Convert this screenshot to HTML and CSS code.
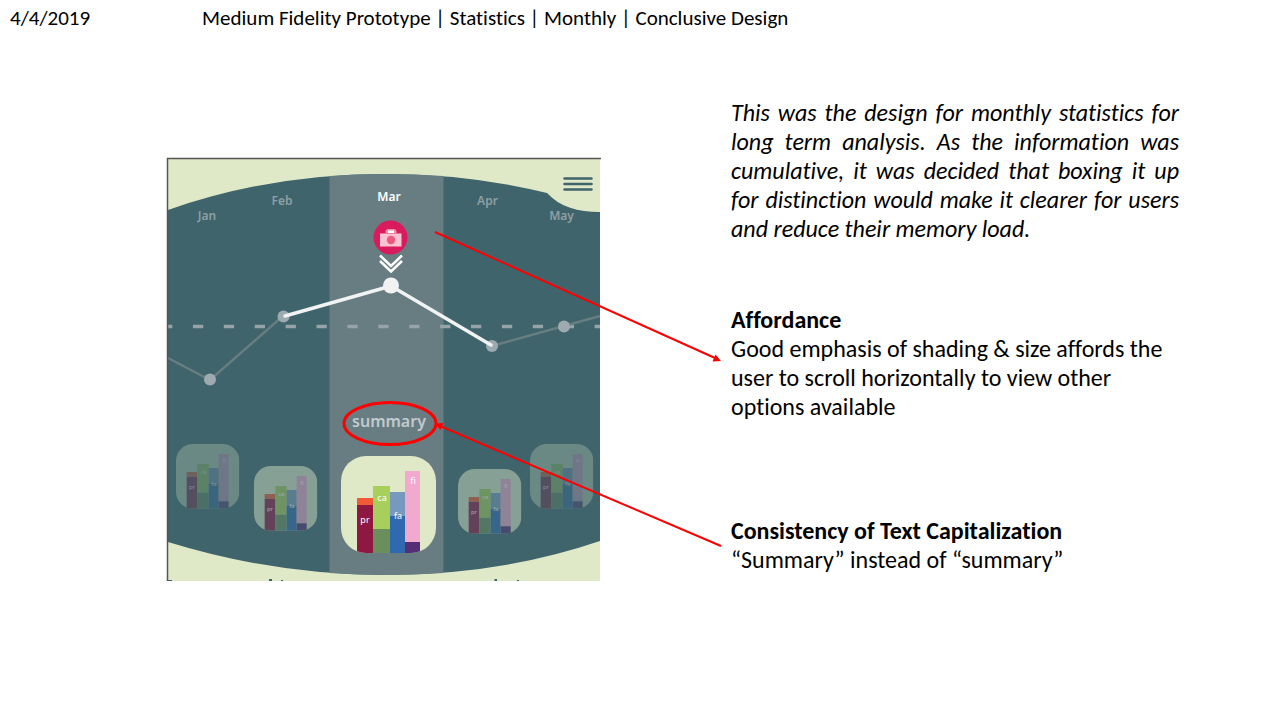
FILE: index.html
```html
<!DOCTYPE html>
<html lang="en">
<head>
<meta charset="utf-8">
<title>Medium Fidelity Prototype</title>
<link rel="stylesheet" href="styles.css">
</head>
<body>
<header class="topbar">
  <time class="date" datetime="2019-04-04">4/4/2019</time>
  <h1 class="title">Medium Fidelity Prototype | Statistics | Monthly | Conclusive Design</h1>
</header>
<main class="slide">
  <svg class="mockup" viewBox="166 158 435 423" role="img" aria-label="Monthly statistics screen">
    <defs>
      <clipPath id="card-clip"><rect width="95" height="97" rx="25"/></clipPath>
      <g id="card" clip-path="url(#card-clip)">
        <rect width="95" height="97" fill="#dfe9c8"/>
        <path fill="#f05a36" d="M16 42h16v7H16z"/><path fill="#8f1842" d="M16 49h16v48H16z"/>
        <path fill="#a8cf5c" d="M32 30h17v43H32z"/><path fill="#6b8f5c" d="M32 73h17v24H32z"/>
        <path fill="#7799bd" d="M49 36h15v25H49z"/><path fill="#2f69b0" d="M49 60h15v37H49z"/>
        <path fill="#f2a9ce" d="M64 15h15v71H64z"/><path fill="#552f75" d="M64 86h15v11H64z"/>
        <g class="bar-label">
          <text x="24" y="67">pr</text><text x="41" y="45">ca</text><text x="57" y="63">fa</text><text x="72" y="28">fi</text>
        </g>
      </g>
    </defs>
    <rect x="167" y="158" width="433" height="423" fill="#dfe9c8"/>
    <path fill="#3f646b" d="M168 210Q270 174 385 174Q470 174 547 193C560 207 578 212 600 212V541Q500 575 385 575Q275 575 168 542Z"/>
    <path fill="#677d82" d="M329.500 176Q385 172 443.500 176V573Q385 577 329.500 573Z"/>
    <path fill="none" stroke="#3f646b" stroke-width="2.5" stroke-linecap="round" d="M564.500 178.500H591.500M564.500 184H591.500M564.500 189.500H591.500"/>
    <path fill="#3f646b" d="M269 579h3v2h-3zM281 580h2v1h-2zM494.500 579h2.500v2h-2.500zM517 580h2v1h-2zM168 580h4v1h-4z"/>
    <path fill="none" stroke="#96a3a8" stroke-width="3.500" stroke-dasharray="10.300 20.600" stroke-dashoffset="6" d="M168 326.500H600"/>
    <path fill="none" stroke="#677d82" stroke-width="2.500" d="M168 358L210 380L283 316M492 346L564 326L600 316"/>
    <g fill="#9daab0"><circle cx="210" cy="379.500" r="6"/><circle cx="283.500" cy="316.500" r="6"/><circle cx="492" cy="346" r="6"/><circle cx="564" cy="326.500" r="6"/></g>
    <path fill="none" stroke="#f1f2f2" stroke-width="3.500" stroke-linecap="round" stroke-linejoin="round" d="M285 316L391 286L491 345"/>
    <circle cx="391" cy="285.500" r="8" fill="#f1f2f2"/>
    <g class="month">
      <text x="207" y="220">Jan</text><text x="282" y="205">Feb</text><text class="current" x="389" y="201">Mar</text><text x="487.500" y="205">Apr</text><text x="561.500" y="220">May</text>
    </g>
    <circle cx="390.500" cy="237.500" r="17" fill="#d91a5d"/>
    <path fill="#fac3d2" d="M380 233.500H401.500V246.500H380Z"/>
    <path fill="#f58ba7" d="M385.500 233.500V231Q386 229 388 229H394Q396 229 396.500 231V233.500Z"/><path fill="#fff" d="M388 230.500H394V233H388Z"/>
    <circle cx="391" cy="240" r="4.200" fill="#f0577f"/>
    <path fill="none" stroke="#fff" stroke-width="2.500" d="M380 255.500L391 266L402 255.500M380 261L391 271.500L402 261"/>
    <text class="summary" x="389" y="427">summary</text>
    <use href="#card" transform="translate(176 444) scale(.667)" opacity=".27"/>
    <use href="#card" transform="translate(254 466) scale(.667)" opacity=".45"/>
    <use href="#card" transform="translate(341 456)"/>
    <use href="#card" transform="translate(458 469) scale(.667)" opacity=".45"/>
    <use href="#card" transform="translate(530 444) scale(.667)" opacity=".27"/>
    <path fill="none" stroke="#555" stroke-width="1.500" d="M167.500 581V158.500H601"/>
    <ellipse cx="390" cy="423.500" rx="46" ry="21" fill="none" stroke="#f00" stroke-width="3"/>
    <path fill="none" stroke="#f00" stroke-width="2" d="M435 232L715 358M721 546L440 426"/>
    <path fill="#f00" d="M721 361L715.500 354.500L712.500 361.500ZM435 423.500L443.500 423L440.500 430Z"/>
  </svg>
  <div class="notes">
    <p class="intro">This was the design for monthly statistics for long term analysis. As the information was cumulative, it was decided that boxing it up for distinction would make it clearer for users and reduce their memory load.</p>
    <section class="note">
      <h2>Affordance</h2>
      <p>Good emphasis of shading &amp; size affords the user to scroll horizontally to view other options available</p>
    </section>
    <section class="note">
      <h2>Consistency of Text Capitalization</h2>
      <p>“Summary” instead of “summary”</p>
    </section>
  </div>
</main>
</body>
</html>
```
FILE: styles.css
```css
* { box-sizing: border-box; margin: 0; }
body {
  background: #fff;
  color: #000;
  font-family: Carlito, Calibri, Lato, sans-serif;
  font-variant-ligatures: none;
}
.topbar {
  display: flex;
  gap: 112px;
  padding: 6px 10px 8px;
  font-size: 21px;
  line-height: 24px;
}
.title { font-size: inherit; font-weight: 400; }
.slide {
  display: grid;
  grid-template-columns: 435px minmax(0, 448px);
  align-items: start;
  gap: 130px;
  padding: 60px 60px 0 166px;
}
.mockup {
  width: 100%;
  margin-top: 60px;
  overflow: visible;
}
.notes {
  font-size: 24px;
  line-height: 29px;
}
.intro { font-style: italic; text-align: justify; }
.note { margin-top: 62px; }
.note + .note { margin-top: 95px; }
.note h2 { font-size: inherit; font-weight: 700; }
.month, .summary {
  fill: #8f9fa5;
  font-family: "Noto Sans", "Open Sans", sans-serif;
  font-size: 12px;
  font-weight: 600;
  text-anchor: middle;
}
.month .current { fill: #fff; }
.summary { fill: #c2cacd; font-size: 16px; }
.bar-label { fill: #fff; font-family: "Noto Sans", sans-serif; font-size: 9px; text-anchor: middle; }
```
